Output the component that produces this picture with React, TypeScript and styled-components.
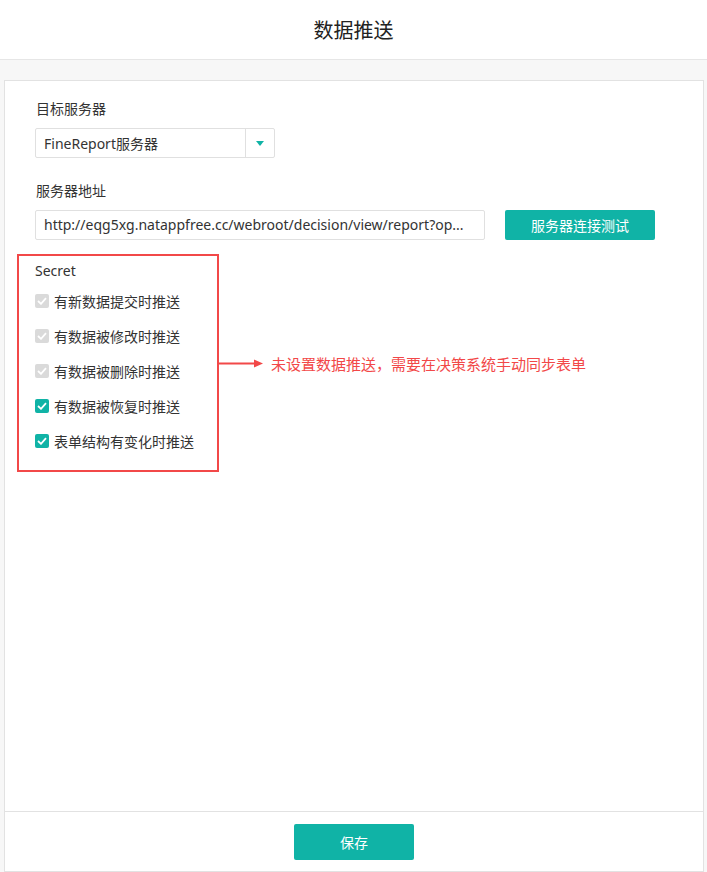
import React from "react";
import styled, { createGlobalStyle } from "styled-components";

const GlobalStyle = createGlobalStyle`
  html, body {
    margin: 0;
    padding: 0;
    background: #fff;
  }
  body {
    font-family: "Noto Sans", "Noto Sans CJK SC", sans-serif;
    color: #333;
  }
`;

const TEAL = "#10b3a6";
const RED = "#f24848";

const Page = styled.div`
  display: flex;
  flex-direction: column;
  height: 100vh;
`;

const Header = styled.header`
  height: 59px;
  flex: none;
  display: flex;
  align-items: center;
  justify-content: center;
  border-bottom: 1px solid #e6e6e6;
  font-family: "Noto Sans CJK SC", sans-serif;
  font-size: 20px;
  color: #222;
  background: #fff;
`;

const Body = styled.div`
  flex: 1;
  display: flex;
  background: #f7f7f7;
  padding: 20px 3px 0 4px;
  min-height: 0;
`;

const Panel = styled.div`
  flex: 1;
  display: flex;
  flex-direction: column;
  background: #fff;
  border: 1px solid #e2e2e2;
`;

const Content = styled.div`
  flex: 1;
  padding: 17px 30px 0 30px;
`;

const Label = styled.div`
  font-family: "Noto Sans CJK SC", sans-serif;
  font-size: 14px;
  line-height: 20px;
  margin-bottom: 10px;
  padding-left: 1px;
`;

const Field = styled.div`
  margin-bottom: 22px;
`;

const Select = styled.div`
  width: 240px;
  height: 30px;
  box-sizing: border-box;
  display: flex;
  border: 1px solid #e0e0e0;
  border-radius: 2px;
  font-size: 14px;
`;

const SelectValue = styled.div`
  flex: 1;
  display: flex;
  align-items: center;
  padding-left: 8px;
`;

const SelectArrow = styled.div`
  width: 28px;
  display: flex;
  align-items: center;
  justify-content: center;
  border-left: 1px solid #e0e0e0;
  &::after {
    content: "";
    border-left: 4.5px solid transparent;
    border-right: 4.5px solid transparent;
    border-top: 5px solid ${TEAL};
  }
`;

const Row = styled.div`
  display: flex;
  gap: 20px;
`;

const Input = styled.div`
  width: 450px;
  height: 30px;
  box-sizing: border-box;
  border: 1px solid #e0e0e0;
  border-radius: 2px;
  padding: 0 8px;
  font-size: 14px;
  line-height: 28px;
  white-space: nowrap;
`;

const Button = styled.button<{ $w: number; $h: number }>`
  width: ${(p) => p.$w}px;
  height: ${(p) => p.$h}px;
  border: none;
  border-radius: 2px;
  background: ${TEAL};
  color: #fff;
  font-family: "Noto Sans CJK SC", sans-serif;
  font-size: 14px;
  padding: 0;
  cursor: pointer;
`;

const Annotated = styled.div`
  position: relative;
  width: 202px;
  box-sizing: border-box;
  margin: -8px 0 0 -18px;
  padding: 5px 0 12px 16px;
  border: 2px solid ${RED};
`;

const SectionTitle = styled.div`
  font-size: 14px;
  line-height: 20px;
  margin-bottom: 2px;
`;

const CheckRow = styled.label`
  display: flex;
  align-items: center;
  height: 35px;
  gap: 5px;
  font-family: "Noto Sans CJK SC", sans-serif;
  font-size: 14px;
`;

const Box = styled.span<{ $disabled?: boolean }>`
  width: 14px;
  height: 14px;
  border-radius: 2px;
  display: flex;
  align-items: center;
  justify-content: center;
  background: ${(p) => (p.$disabled ? "#dadada" : TEAL)};
`;

const Note = styled.div`
  position: absolute;
  left: 100%;
  top: 50%;
  transform: translateY(-50%);
  display: flex;
  align-items: center;
  gap: 8px;
  white-space: nowrap;
  font-family: "Noto Sans CJK SC", sans-serif;
  font-size: 15px;
  color: ${RED};
`;

const Arrow = styled.span`
  display: flex;
  align-items: center;
  &::before {
    content: "";
    width: 37px;
    height: 2px;
    background: ${RED};
  }
  &::after {
    content: "";
    border-top: 4.5px solid transparent;
    border-bottom: 4.5px solid transparent;
    border-left: 9px solid ${RED};
  }
`;

const Footer = styled.div`
  height: 59px;
  flex: none;
  display: flex;
  align-items: center;
  justify-content: center;
  border-top: 1px solid #e2e2e2;
`;

const Check: React.FC<{ disabled?: boolean }> = ({ disabled }) => (
  <Box $disabled={disabled}>
    <svg width="10" height="8" viewBox="0 0 10 8">
      <path d="M1 4 L4 6.8 L9 1.2" fill="none" stroke="#fff" strokeWidth="1.8" />
    </svg>
  </Box>
);

const options = [
  { text: "有新数据提交时推送", disabled: true },
  { text: "有数据被修改时推送", disabled: true },
  { text: "有数据被删除时推送", disabled: true },
  { text: "有数据被恢复时推送", disabled: false },
  { text: "表单结构有变化时推送", disabled: false },
];

const App: React.FC = () => {
  return (
    <>
      <GlobalStyle />
      <Page>
        <Header>数据推送</Header>
        <Body>
          <Panel>
            <Content>
              <Field>
                <Label>目标服务器</Label>
                <Select>
                  <SelectValue>FineReport服务器</SelectValue>
                  <SelectArrow />
                </Select>
              </Field>
              <Field>
                <Label>服务器地址</Label>
                <Row>
                  <Input>http://eqg5xg.natappfree.cc/webroot/decision/view/report?op...</Input>
                  <Button $w={150} $h={30}>服务器连接测试</Button>
                </Row>
              </Field>
              <Annotated>
                <SectionTitle>Secret</SectionTitle>
                {options.map((o) => (
                  <CheckRow key={o.text}>
                    <Check disabled={o.disabled} />
                    {o.text}
                  </CheckRow>
                ))}
                <Note>
                  <Arrow />
                  未设置数据推送，需要在决策系统手动同步表单
                </Note>
              </Annotated>
            </Content>
            <Footer>
              <Button $w={120} $h={36}>保存</Button>
            </Footer>
          </Panel>
        </Body>
      </Page>
    </>
  );
};

export default App;
